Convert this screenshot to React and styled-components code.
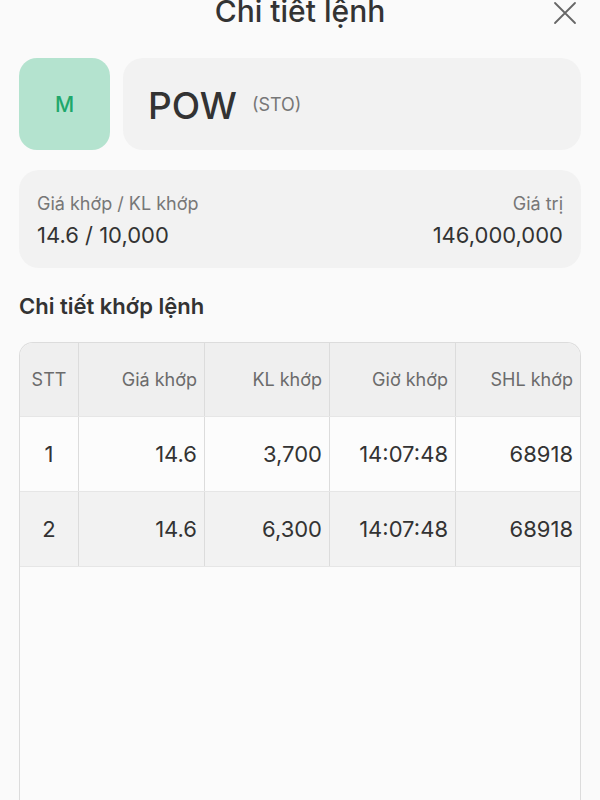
import React from 'react'
import styled, { createGlobalStyle } from 'styled-components'

const GlobalStyle = createGlobalStyle`
  html, body {
    margin: 0;
    padding: 0;
    background: #fafafa;
    overflow: hidden;
  }
  body {
    font-family: Inter, 'Noto Sans', sans-serif;
    color: #333;
  }
`

const Page = styled.div`
  width: 600px;
  height: 800px;
  box-sizing: border-box;
  padding: 0 19px;
  overflow: hidden;
`

const Header = styled.div`
  display: grid;
  grid-template-columns: 1fr auto 1fr;
  align-items: center;
  height: 36px;
  margin-top: -7px;
`

const Title = styled.h1`
  grid-column: 2;
  margin: 0;
  font-size: 30px;
  font-weight: 500;
  color: #333;
  line-height: 36px;
`

const Close = styled.button`
  grid-column: 3;
  justify-self: end;
  margin-right: 4px;
  margin-top: 4px;
  width: 24px;
  height: 24px;
  padding: 0;
  border: 0;
  background: transparent;
  svg {
    display: block;
    width: 24px;
    height: 24px;
  }
`

const TopRow = styled.div`
  display: flex;
  gap: 13px;
  margin-top: 29px;
`

const Avatar = styled.div`
  width: 91px;
  height: 92px;
  border-radius: 18px;
  background: #b4e3cf;
  display: flex;
  align-items: center;
  justify-content: center;
  color: #1ea86b;
  font-size: 21px;
  font-weight: 500;
`

const NameBox = styled.div`
  flex: 1;
  height: 92px;
  border-radius: 20px;
  background: #f2f2f2;
  display: flex;
  align-items: center;
  padding: 0 25px;
  box-sizing: border-box;
`

const Symbol = styled.span`
  font-size: 37px;
  font-weight: 500;
  color: #333;
  line-height: 44px;
  margin-top: 3px;
`

const Exchange = styled.span`
  margin-left: 15px;
  font-size: 18px;
  color: #777;
`

const InfoCard = styled.div`
  margin-top: 20px;
  height: 98px;
  box-sizing: border-box;
  border-radius: 20px;
  background: #f2f2f2;
  padding: 22px 18px 0;
  display: flex;
  justify-content: space-between;
`

const InfoCol = styled.div`
  display: flex;
  flex-direction: column;
  gap: 5px;
  align-items: ${p => (p.right ? 'flex-end' : 'flex-start')};
`

const Label = styled.div`
  font-size: 18px;
  line-height: 24px;
  color: #777;
`

const Value = styled.div`
  font-size: 22px;
  line-height: 28px;
  color: #333;
`

const SectionTitle = styled.h2`
  margin: 24px 0 0;
  font-size: 22px;
  line-height: 28px;
  font-weight: 600;
  color: #333;
`

const Table = styled.div`
  margin-top: 22px;
  width: 562px;
  height: 480px;
  box-sizing: border-box;
  border: 1px solid #dcdcdc;
  border-bottom: 0;
  border-radius: 14px 14px 0 0;
  overflow: hidden;
  background: #fbfbfb;
`

const Row = styled.div`
  display: grid;
  grid-template-columns: 59px 126px 125px 126px 1fr;
  height: ${p => (p.head ? '74px' : '75px')};
  background: ${p => p.bg};
  border-bottom: 1px solid #e6e6e6;
  box-sizing: border-box;
`

const Cell = styled.div`
  display: flex;
  align-items: center;
  justify-content: ${p => (p.center ? 'center' : 'flex-end')};
  padding-right: ${p => (p.center ? '0' : '7px')};
  border-right: ${p => (p.last ? '0' : '1px solid #dcdcdc')};
  font-size: ${p => (p.head ? '18px' : '22px')};
  color: ${p => (p.head ? '#6b6b6b' : '#333')};
  white-space: nowrap;
`

const columns = ['STT', 'Giá khớp', 'KL khớp', 'Giờ khớp', 'SHL khớp']

const rows = [
  ['1', '14.6', '3,700', '14:07:48', '68918'],
  ['2', '14.6', '6,300', '14:07:48', '68918'],
]

const App = () => (
  <Page>
    <GlobalStyle />
    <Header>
      <Title>Chi tiết lệnh</Title>
      <Close aria-label='close'>
        <svg viewBox='0 0 24 24' fill='none' stroke='#666' strokeWidth='1.8' strokeLinecap='round'>
          <path d='M2 2 L22 22 M22 2 L2 22' />
        </svg>
      </Close>
    </Header>

    <TopRow>
      <Avatar>M</Avatar>
      <NameBox>
        <Symbol>POW</Symbol>
        <Exchange>(STO)</Exchange>
      </NameBox>
    </TopRow>

    <InfoCard>
      <InfoCol>
        <Label>Giá khớp / KL khớp</Label>
        <Value>14.6 / 10,000</Value>
      </InfoCol>
      <InfoCol right>
        <Label>Giá trị</Label>
        <Value>146,000,000</Value>
      </InfoCol>
    </InfoCard>

    <SectionTitle>Chi tiết khớp lệnh</SectionTitle>

    <Table>
      <Row head bg='#efefef'>
        {columns.map((c, i) => (
          <Cell key={c} head center={i === 0} last={i === columns.length - 1}>{c}</Cell>
        ))}
      </Row>
      {rows.map((r, ri) => (
        <Row key={ri} bg={ri % 2 ? '#f2f2f2' : '#fcfcfc'}>
          {r.map((v, i) => (
            <Cell key={i} center={i === 0} last={i === r.length - 1}>{v}</Cell>
          ))}
        </Row>
      ))}
    </Table>
  </Page>
)

export default App
